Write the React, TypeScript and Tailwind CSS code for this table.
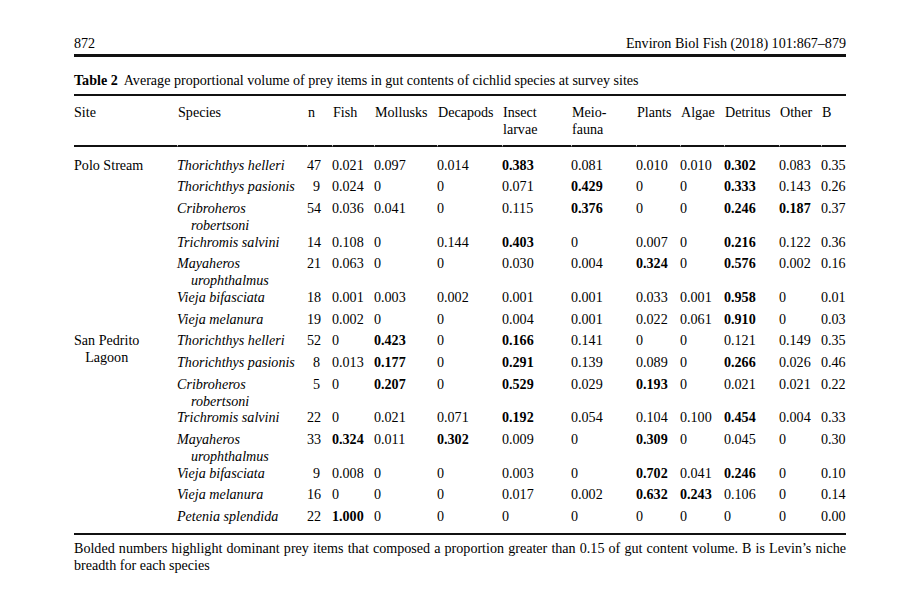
type Row = {
  site?: string[];
  span?: number;
  sp: string[];
  n: number;
  v: string[];
};

// "*" in front of a value = bold (dominant prey item)
const rows: Row[] = [
  { site: ["Polo Stream"], span: 7, sp: ["Thorichthys helleri"], n: 47, v: ["0.021", "0.097", "0.014", "*0.383", "0.081", "0.010", "0.010", "*0.302", "0.083", "0.35"] },
  { sp: ["Thorichthys pasionis"], n: 9, v: ["0.024", "0", "0", "0.071", "*0.429", "0", "0", "*0.333", "0.143", "0.26"] },
  { sp: ["Cribroheros", "robertsoni"], n: 54, v: ["0.036", "0.041", "0", "0.115", "*0.376", "0", "0", "*0.246", "*0.187", "0.37"] },
  { sp: ["Trichromis salvini"], n: 14, v: ["0.108", "0", "0.144", "*0.403", "0", "0.007", "0", "*0.216", "0.122", "0.36"] },
  { sp: ["Mayaheros", "urophthalmus"], n: 21, v: ["0.063", "0", "0", "0.030", "0.004", "*0.324", "0", "*0.576", "0.002", "0.16"] },
  { sp: ["Vieja bifasciata"], n: 18, v: ["0.001", "0.003", "0.002", "0.001", "0.001", "0.033", "0.001", "*0.958", "0", "0.01"] },
  { sp: ["Vieja melanura"], n: 19, v: ["0.002", "0", "0", "0.004", "0.001", "0.022", "0.061", "*0.910", "0", "0.03"] },
  { site: ["San Pedrito", "Lagoon"], span: 8, sp: ["Thorichthys helleri"], n: 52, v: ["0", "*0.423", "0", "*0.166", "0.141", "0", "0", "0.121", "0.149", "0.35"] },
  { sp: ["Thorichthys pasionis"], n: 8, v: ["0.013", "*0.177", "0", "*0.291", "0.139", "0.089", "0", "*0.266", "0.026", "0.46"] },
  { sp: ["Cribroheros", "robertsoni"], n: 5, v: ["0", "*0.207", "0", "*0.529", "0.029", "*0.193", "0", "0.021", "0.021", "0.22"] },
  { sp: ["Trichromis salvini"], n: 22, v: ["0", "0.021", "0.071", "*0.192", "0.054", "0.104", "0.100", "*0.454", "0.004", "0.33"] },
  { sp: ["Mayaheros", "urophthalmus"], n: 33, v: ["*0.324", "0.011", "*0.302", "0.009", "0", "*0.309", "0", "0.045", "0", "0.30"] },
  { sp: ["Vieja bifasciata"], n: 9, v: ["0.008", "0", "0", "0.003", "0", "*0.702", "0.041", "*0.246", "0", "0.10"] },
  { sp: ["Vieja melanura"], n: 16, v: ["0", "0", "0", "0.017", "0.002", "*0.632", "*0.243", "0.106", "0", "0.14"] },
  { sp: ["Petenia splendida"], n: 22, v: ["*1.000", "0", "0", "0", "0", "0", "0", "0", "0", "0.00"] },
];

const heads: string[][] = [
  ["Site"], ["Species"], ["n"], ["Fish"], ["Mollusks"], ["Decapods"], ["Insect", "larvae"],
  ["Meio-", "fauna"], ["Plants"], ["Algae"], ["Detritus"], ["Other"], ["B"],
];

const widths = ["w-[103px]", "w-[130px]", "w-[25px]", "w-[42px]", "w-[63px]", "w-[65px]", "w-[69px]", "w-[65px]", "w-[44px]", "w-[44px]", "w-[55px]", "w-[42px]", "w-[25px]"];

export default function App() {
  return (
    <div className="w-[912px] h-[606px] bg-white text-black text-[14.1px] leading-[17px] overflow-hidden font-['Liberation_Serif','Times_New_Roman',serif]">
      <div className="ml-[74px] w-[772px] pt-[35px]">
        <div className="flex justify-between">
          <span>872</span>
          <span>Environ Biol Fish (2018) 101:867–879</span>
        </div>
        <div className="mt-[2px] h-[3px] bg-[#111]" />
        <div className="mt-[15px]">
          <span className="font-bold">Table 2</span>
          <span className="ml-[6px]">Average proportional volume of prey items in gut contents of cichlid species at survey sites</span>
        </div>
        <div className="mt-[4.5px] h-[2px] bg-[#111]" />
        <table className="table-fixed w-[772px] border-separate border-spacing-0">
          <colgroup>
            {widths.map((w, i) => (
              <col key={i} className={w} />
            ))}
          </colgroup>
          <thead>
            <tr>
              {heads.map((h, i) => (
                <th
                  key={i}
                  className={
                    "text-left font-normal align-top pt-[8px] pb-[7px] border-b-2 border-b-[#111] " +
                    (i > 0 ? "border-l-[1.5px] border-l-white" : "")
                  }
                >
                  {h.map((t, j) => (
                    <div key={j}>{t}</div>
                  ))}
                </th>
              ))}
            </tr>
          </thead>
          <tbody>
            {rows.map((r, ri) => {
              const pad = ri === 0 ? "pt-[10px] pb-[2.35px]" : "pt-[2.35px] pb-[2.35px]";
              return (
                <tr key={ri}>
                  {r.site && (
                    <td rowSpan={r.span} className={"align-top " + pad}>
                      <div className="inline-block text-center">
                        {r.site.map((s, j) => (
                          <div key={j}>{s}</div>
                        ))}
                      </div>
                    </td>
                  )}
                  <td className={"align-top italic " + pad}>
                    <div>{r.sp[0]}</div>
                    {r.sp[1] && <div className="pl-[14px] mb-[-5px]">{r.sp[1]}</div>}
                  </td>
                  <td className={"align-top text-right pr-[12px] " + pad}>{r.n}</td>
                  {r.v.map((v, vi) => {
                    const bold = v.startsWith("*");
                    return (
                      <td key={vi} className={"align-top " + pad + (bold ? " font-bold" : "")}>
                        {bold ? v.slice(1) : v}
                      </td>
                    );
                  })}
                </tr>
              );
            })}
          </tbody>
        </table>
        <div className="mt-[6px] h-[2px] bg-[#111]" />
        <p className="mt-[4.5px] text-justify">
          Bolded numbers highlight dominant prey items that composed a proportion greater than 0.15 of gut content volume. B is Levin’s niche breadth for each species
        </p>
      </div>
    </div>
  );
}
